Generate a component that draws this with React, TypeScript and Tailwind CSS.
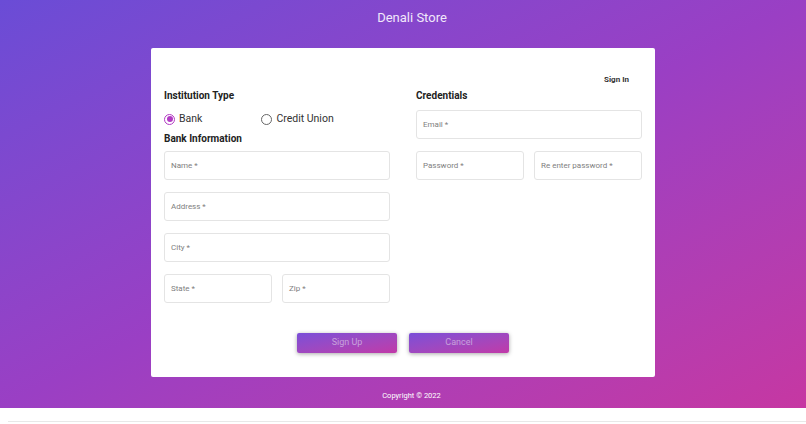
import React from "react";

const Field = ({ label, className = "" }: { label: string; className?: string }) => (
  <div
    className={`h-[29px] flex items-center px-[6px] border border-[#e4e4e4] rounded-[3px] bg-white text-[8px] text-[#808080] ${className}`}
  >
    {label}
  </div>
);

const Radio = ({ label, checked }: { label: string; checked?: boolean }) => (
  <div className="flex items-center gap-[4px]">
    <span
      className={`w-[11px] h-[11px] rounded-full border flex items-center justify-center ${
        checked ? "border-[#b23bc4]" : "border-[#666]"
      }`}
    >
      {checked && <span className="w-[6px] h-[6px] rounded-full bg-[#b23bc4]" />}
    </span>
    <span className="text-[10.5px] text-[#333]">{label}</span>
  </div>
);

export default function App() {
  return (
    <div
      className="w-full h-[424px] bg-white flex flex-col"
      style={{ fontFamily: "Roboto, 'Liberation Sans', sans-serif" }}
    >
      <div className="h-[408px] bg-gradient-to-br from-[#6a4cd6] via-[#9a3fc4] to-[#c637a2] flex flex-col items-center">
        <div className="h-[35px] pl-[18px] flex items-center text-[13px] text-[#f1e8fb]">Denali Store</div>
        <div className="mt-[13px] w-[504px] h-[329px] bg-white rounded-[2px] flex flex-col px-[13px] pt-[26px] pb-[24px]">
          <div className="h-[12px] flex items-center justify-end pr-[13px] text-[8px] font-bold text-[#333]">
            Sign In
          </div>
          <div className="mt-[3px] grid grid-cols-2 gap-[26px]">
            <div className="flex flex-col">
              <div className="h-[12px] flex items-center text-[10px] font-bold text-[#222]">
                Institution Type
              </div>
              <div className="mt-[11px] h-[14px] flex items-center gap-[59px]">
                <Radio label="Bank" checked />
                <Radio label="Credit Union" />
              </div>
              <div className="mt-[6px] h-[12px] flex items-center text-[10px] font-bold text-[#222]">
                Bank Information
              </div>
              <div className="mt-[7px] flex flex-col gap-[12px]">
                <Field label="Name *" />
                <Field label="Address *" />
                <Field label="City *" />
                <div className="grid grid-cols-2 gap-[10px]">
                  <Field label="State *" />
                  <Field label="Zip *" />
                </div>
              </div>
            </div>
            <div className="flex flex-col">
              <div className="h-[12px] flex items-center text-[10px] font-bold text-[#222]">
                Credentials
              </div>
              <Field label="Email *" className="mt-[9px]" />
              <div className="mt-[12px] grid grid-cols-2 gap-[10px]">
                <Field label="Password *" />
                <Field label="Re enter password *" />
              </div>
            </div>
          </div>
          <div className="mt-auto flex justify-center gap-[12px]">
            <button className="w-[100px] h-[20px] rounded-[2px] bg-gradient-to-br from-[#7a4ed8] to-[#c138a8] text-[9px] text-[#c8a2dc] shadow-[0_1px_4px_rgba(0,0,0,0.35)]">
              Sign Up
            </button>
            <button className="w-[100px] h-[20px] rounded-[2px] bg-gradient-to-br from-[#7a4ed8] to-[#c138a8] text-[9px] text-[#c8a2dc] shadow-[0_1px_4px_rgba(0,0,0,0.35)]">
              Cancel
            </button>
          </div>
        </div>
        <div className="flex-1 pt-[6px] pl-[17px] flex items-center text-[7.5px] font-normal text-white">
          Copyright © 2022
        </div>
      </div>
      <div className="mt-[13px] ml-[8px] h-px bg-[#e8e8e8]" />
    </div>
  );
}
